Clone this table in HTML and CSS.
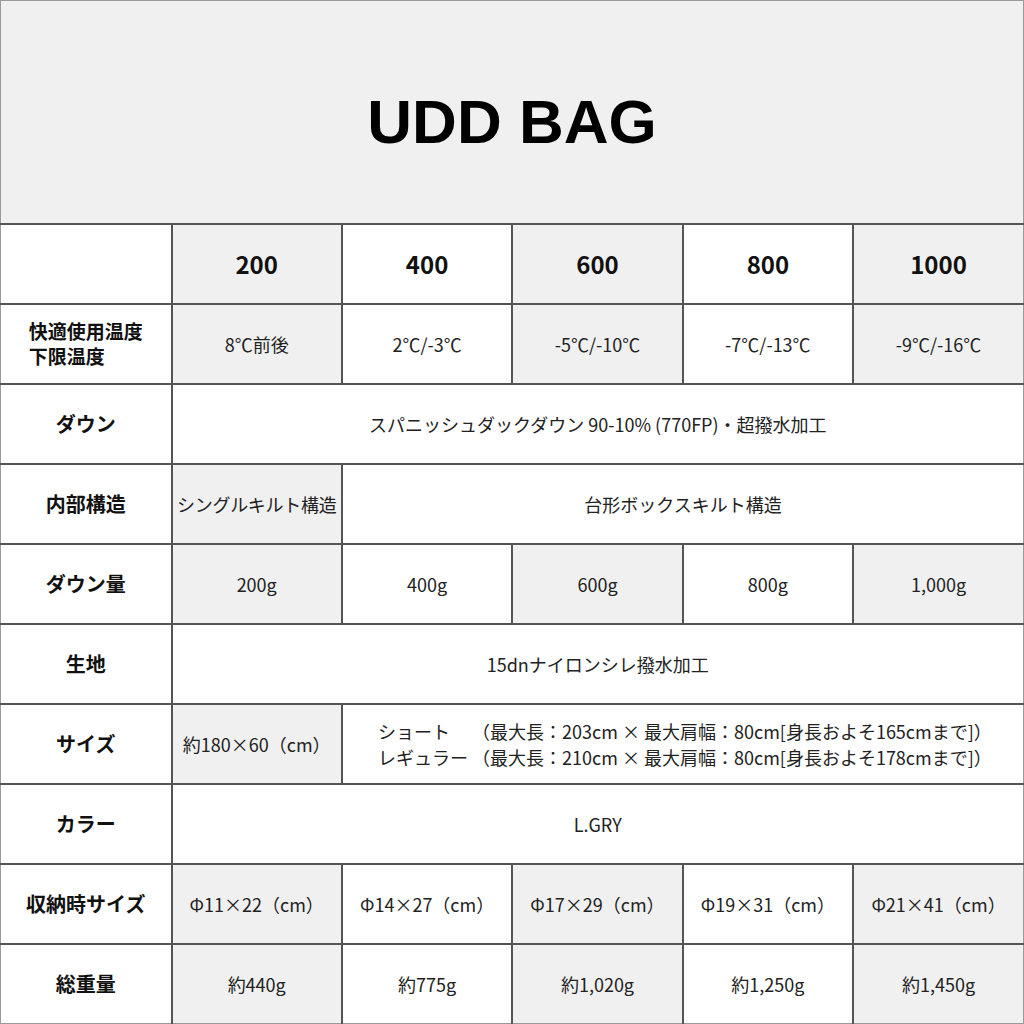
FILE: index.html
```html
<!DOCTYPE html>
<html lang="ja">
<head>
<meta charset="utf-8">
<link rel="stylesheet" href="styles.css">
</head>
<body>
<div class="page">
  <header class="hero"><h1>UDD BAG</h1></header>
  <table class="spec">
    <colgroup><col class="c-label"><col><col><col><col><col></colgroup>
    <tr class="head">
      <th class="lbl"></th>
      <th class="sh">200</th><th>400</th><th class="sh">600</th><th>800</th><th class="sh">1000</th>
    </tr>
    <tr>
      <th class="lbl"><div class="multi"><div>快適使用温度</div><div>下限温度</div></div></th>
      <td class="sh">8℃前後</td><td>2℃/-3℃</td><td class="sh">-5℃/-10℃</td><td>-7℃/-13℃</td><td class="sh">-9℃/-16℃</td>
    </tr>
    <tr>
      <th class="lbl">ダウン</th>
      <td colspan="5">スパニッシュダックダウン 90-10% (770FP)・超撥水加工</td>
    </tr>
    <tr>
      <th class="lbl">内部構造</th>
      <td class="sh tight">シングルキルト構造</td><td colspan="4">台形ボックスキルト構造</td>
    </tr>
    <tr>
      <th class="lbl">ダウン量</th>
      <td class="sh">200g</td><td>400g</td><td class="sh">600g</td><td>800g</td><td class="sh">1,000g</td>
    </tr>
    <tr>
      <th class="lbl">生地</th>
      <td colspan="5">15dnナイロンシレ撥水加工</td>
    </tr>
    <tr>
      <th class="lbl">サイズ</th>
      <td class="sh">約180×60（cm）</td>
      <td colspan="4">
        <div class="sizes">
          <span>ショート</span><span>（最大長：203cm × 最大肩幅：80cm[身長およそ165cmまで]）</span>
          <span>レギュラー</span><span>（最大長：210cm × 最大肩幅：80cm[身長およそ178cmまで]）</span>
        </div>
      </td>
    </tr>
    <tr>
      <th class="lbl">カラー</th>
      <td colspan="5">L.GRY</td>
    </tr>
    <tr>
      <th class="lbl">収納時サイズ</th>
      <td class="sh">Φ11×22（cm）</td><td>Φ14×27（cm）</td><td class="sh">Φ17×29（cm）</td><td>Φ19×31（cm）</td><td class="sh">Φ21×41（cm）</td>
    </tr>
    <tr class="last">
      <th class="lbl">総重量</th>
      <td class="sh">約440g</td><td>約775g</td><td class="sh">約1,020g</td><td>約1,250g</td><td class="sh">約1,450g</td>
    </tr>
  </table>
</div>
</body>
</html>
```
FILE: styles.css
```css
html, body { margin: 0; padding: 0; background: #fff; }
.page {
  width: 1024px;
  height: 1024px;
  box-sizing: border-box;
  border-top: 1px solid #999;
  overflow: hidden;
  font-family: "Noto Sans CJK JP", "Noto Sans", sans-serif;
  color: #111;
}
.hero {
  height: 222px;
  background: #f0f0f0;
  border-left: 1px solid #999;
  border-right: 1px solid #999;
  display: flex;
  align-items: center;
  justify-content: center;
  box-sizing: border-box;
  padding-top: 20px;
}
.hero h1 {
  margin: 0;
  font-family: "Liberation Sans", Arial, sans-serif;
  font-weight: 700;
  font-size: 62px;
  color: #000;
  line-height: 1;
}
.spec {
  width: 1024px;
  border-collapse: collapse;
  table-layout: fixed;
}
.c-label { width: 171px; }
.spec th, .spec td {
  border: 2px solid #555;
  height: 78px;
  padding: 0;
  text-align: center;
  vertical-align: middle;
  font-size: 18px;
  font-weight: 400;
  line-height: 24px;
  color: #222;
}
.spec tr > :first-child { border-left: 1px solid #999; }
.spec tr > :last-child { border-right: 1px solid #999; }
.spec tr.last > * { border-bottom: 1px solid #999; }
.spec th.lbl {
  font-weight: 700;
  font-size: 20px;
  color: #111;
}
.multi {
  display: inline-flex;
  flex-direction: column;
  gap: 0;
  text-align: left;
  font-size: 19px;
  line-height: 25px;
  padding-bottom: 2px;
}
.spec tr.head th {
  font-weight: 700;
  font-size: 24px;
  color: #111;
}
.spec .sh { background: #f0f0f0; }
.spec .tight { letter-spacing: -0.3px; white-space: nowrap; }
.sizes {
  display: inline-grid;
  grid-template-columns: auto auto;
  column-gap: 4px;
  text-align: left;
  line-height: 26px;
  padding-left: 4px;
}
```
